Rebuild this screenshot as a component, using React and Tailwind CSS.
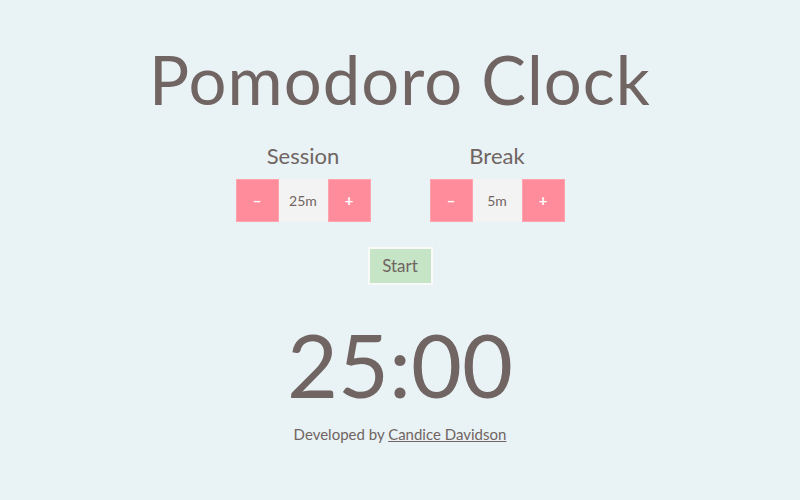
import { useState } from "react";

const Control = ({ label, value, onDec, onInc }) => (
  <div className="flex flex-col items-center">
    <h2 className="text-[22px] leading-none mb-[12px]">{label}</h2>
    <div className="flex">
      <button onClick={onDec}
        className="w-[43px] h-[43px] bg-[#ff8c9b] border border-[#ffa3ae] text-white text-[15px] font-bold">
        –
      </button>
      <div className="w-[49px] h-[43px] bg-[#f3f3f3] flex items-center justify-center text-[14px]">{value}m</div>
      <button onClick={onInc}
        className="w-[43px] h-[43px] bg-[#ff8c9b] border border-[#ffa3ae] text-white text-[15px] font-bold">
        +
      </button>
    </div>
  </div>
);

const App = () => {
  const [session, setSession] = useState(25);
  const [brk, setBrk] = useState(5);

  return (
    <div className="w-[800px] h-[500px] bg-[#e9f2f5] text-[#706562] flex flex-col items-center"
      style={{ fontFamily: "Lato, 'Open Sans', sans-serif" }}>
      <h1 className="text-[67px] leading-none mt-[46px] tracking-[1px]">Pomodoro Clock</h1>
      <div className="flex gap-[59px] mt-[32px]">
        <Control label="Session" value={session}
          onDec={() => setSession((s) => Math.max(1, s - 1))} onInc={() => setSession((s) => s + 1)} />
        <Control label="Break" value={brk}
          onDec={() => setBrk((s) => Math.max(1, s - 1))} onInc={() => setBrk((s) => s + 1)} />
      </div>
      <button className="mt-[25px] w-[65px] h-[38px] bg-[#c6e4c6] border-2 border-[#f7faf7] text-[17px]">Start</button>
      <div className="text-[88px] leading-none mt-[35px]">{session}:00</div>
      <p className="text-[15px] mt-[15px]">
        Developed by <a href="#" className="underline">Candice Davidson</a>
      </p>
    </div>
  );
};
export default App;
